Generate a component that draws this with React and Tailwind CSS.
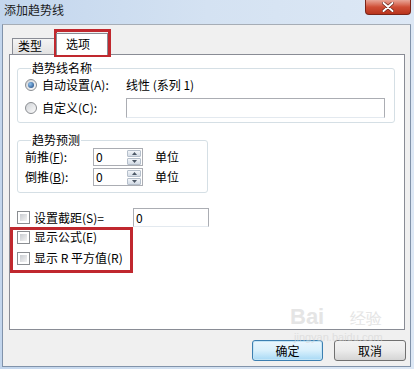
import React from 'react';

const cjk = "font-['Noto_Sans_CJK_SC','Noto_Sans',sans-serif]";

function Radio({ checked }) {
  return (
    <span className="w-[12px] h-[12px] rounded-full border border-[#8a8d91] bg-gradient-to-br from-[#d0d3d7] to-[#fbfbfb] flex items-center justify-center shrink-0">
      {checked && <span className="w-[6px] h-[6px] rounded-full bg-[radial-gradient(circle_at_35%_35%,#8fc3f0,#173f78)]" />}
    </span>
  );
}

function Check() {
  return (
    <span className="w-[13px] h-[13px] border border-[#8a8d91] bg-white p-[2px] shrink-0">
      <span className="block w-full h-full bg-gradient-to-br from-[#c9ccd1] to-[#f4f4f4]" />
    </span>
  );
}

function SpinBtn({ up }) {
  return (
    <span className="h-[7px] w-[14px] border border-[#b5bfcb] rounded-[1px] bg-gradient-to-b from-[#f2f5f9] to-[#d3dbe5] flex items-center justify-center">
      <svg width="5" height="3" viewBox="0 0 5 3">
        <path d={up ? 'M0 3 L2.5 0 L5 3 Z' : 'M0 0 L2.5 3 L5 0 Z'} fill="#4d5866" />
      </svg>
    </span>
  );
}

function Spin() {
  return (
    <div className="w-[50px] h-[18px] border border-[#abadb3] bg-white flex items-center">
      <span className="flex-1 pl-[2px] text-[12px] leading-[14px]">0</span>
      <div className="flex flex-col justify-center gap-[1px] pr-[1px]">
        <SpinBtn up />
        <SpinBtn />
      </div>
    </div>
  );
}

export default function App() {
  return (
    <div className={`relative w-[414px] h-[369px] overflow-hidden bg-gradient-to-r from-[#c3d6ed] via-[#d4e2f2] to-[#dde8f5] flex flex-col text-[12px] leading-[14px] text-black ${cjk}`}>
      {/* title bar */}
      <div className="h-[24px] flex items-start justify-between">
        <span className="pl-[4px] pt-[3px] text-[#1b1b1b]">添加趋势线</span>
        <div className="mr-[3px] w-[46px] h-[15px] rounded-b-[4px] border border-t-0 border-[#7a2418] bg-gradient-to-b from-[#e8a597] via-[#cf4e36] to-[#b8341c] flex items-center justify-center">
          <svg width="12" height="10" viewBox="0 0 12 10">
            <path d="M1.5 1 L10.5 9 M10.5 1 L1.5 9" stroke="#5a1a10" strokeWidth="3.2" strokeLinecap="round" />
            <path d="M1.5 1 L10.5 9 M10.5 1 L1.5 9" stroke="#ffffff" strokeWidth="2" strokeLinecap="round" />
          </svg>
        </div>
      </div>

      {/* client area */}
      <div className="ml-[2px] w-[409px] h-[343px] border border-[#8193aa] border-t-[#a6adb6] bg-[#f0f0f0] flex flex-col pl-[6px] pt-[8px]">
        {/* tabs */}
        <div className="h-[21px] flex items-end pl-[3px]">
          <div className="w-[44px] h-[16px] border border-b-0 border-[#898c95] bg-gradient-to-b from-[#f4f4f4] to-[#e2e2e2] pl-[5px]">类型</div>
          <div className="relative z-10 -mb-px w-[52px] h-[22px] border border-b-0 border-[#898c95] bg-white pl-[9px] pt-[3px]">选项</div>
        </div>

        {/* tab page */}
        <div className="w-[396px] h-[276px] border border-[#898c95] bg-white pl-[7px] pt-[6px] flex flex-col">
          <fieldset className="w-[378px] border border-[#d5dfe5] rounded-[3px] pl-[7px] pb-[4px] flex flex-col">
            <legend className="ml-[6px] px-[1px]">趋势线名称</legend>
            <div className="mt-[2px] h-[16px] flex items-center">
              <Radio checked />
              <span className="ml-[5px] w-[84px]">自动设置(A):</span>
              <span>线性 (系列 1)</span>
            </div>
            <div className="mt-[5px] h-[20px] flex items-center">
              <Radio />
              <span className="ml-[5px] w-[84px]">自定义(C):</span>
              <div className="w-[259px] h-[20px] border border-[#abadb3] border-b-[#e3e9ef] bg-white" />
            </div>
          </fieldset>

          <fieldset className="mt-[10px] w-[191px] border border-[#d5dfe5] rounded-[3px] pl-[7px] pb-[6px] flex flex-col">
            <legend className="ml-[6px] px-[1px]">趋势预测</legend>
            <div className="mt-[1px] h-[18px] flex items-center">
              <span className="w-[68px]">前推(<span className="underline">F</span>):</span>
              <Spin />
              <span className="ml-[12px]">单位</span>
            </div>
            <div className="mt-[2px] h-[18px] flex items-center">
              <span className="w-[68px]">倒推(<span className="underline">B</span>):</span>
              <Spin />
              <span className="ml-[12px]">单位</span>
            </div>
          </fieldset>

          <div className="mt-[15px] h-[19px] flex items-center">
            <Check />
            <span className="ml-[4px] w-[99px]">设置截距(S)=</span>
            <div className="w-[76px] h-[19px] border border-[#abadb3] border-b-[#e3e9ef] bg-white pl-[2px] flex items-center">0</div>
          </div>
          <div className="mt-[2px] h-[16px] flex items-center">
            <Check />
            <span className="ml-[4px]">显示公式(E)</span>
          </div>
          <div className="mt-[5px] h-[16px] flex items-center">
            <Check />
            <span className="ml-[4px]">显示 R 平方值(R)</span>
          </div>
        </div>

        {/* buttons */}
        <div className="mt-[10px] flex justify-end gap-[11px] pr-[4px]">
          <button className="w-[71px] h-[21px] rounded-[3px] border border-[#3c7fb1] bg-gradient-to-b from-[#eaf6fd] via-[#d9f0fc] to-[#a7d9f5] shadow-[inset_0_0_0_1px_#c4e5f6]">确定</button>
          <button className="w-[72px] h-[21px] rounded-[3px] border border-[#707070] bg-gradient-to-b from-[#f2f2f2] via-[#ebebeb] to-[#d5d5d5]">取消</button>
        </div>
      </div>

      {/* watermark */}
      <div className="pointer-events-none absolute left-[290px] top-[305px] flex flex-col text-[#d4d4d4] opacity-60">
        <span className="font-['Liberation_Sans',sans-serif] text-[22px] leading-[24px] font-bold">Bai<span className="ml-[26px] text-[16px] font-normal">经验</span></span>
        <span className="font-['Liberation_Sans',sans-serif] text-[11px] leading-[12px] ml-[4px]">jingyan.baidu.com</span>
      </div>

      {/* red annotations */}
      <div className="pointer-events-none absolute left-[54px] top-[29px] w-[57px] h-[28px] border-[3px] border-[#c0282e]" />
      <div className="pointer-events-none absolute left-[10px] top-[227px] w-[123px] h-[46px] border-[3px] border-[#c0282e]" />
    </div>
  );
}
